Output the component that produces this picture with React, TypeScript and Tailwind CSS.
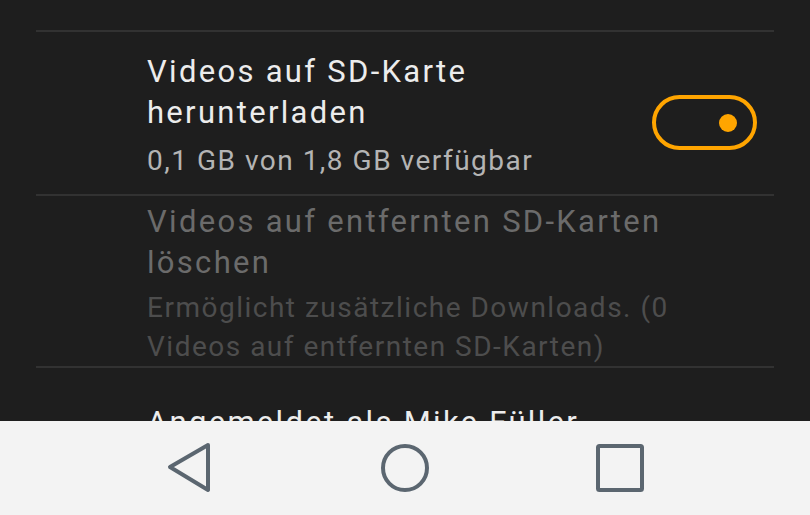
import React from "react";

const font = { fontFamily: "Roboto, 'Noto Sans', sans-serif" };

function Divider() {
  return <div className="mx-[36px] h-[2px] bg-[#323232]" />;
}

function Toggle() {
  return (
    <div className="flex h-[55px] w-[105px] shrink-0 items-center justify-end rounded-full border-[4px] border-[#ffa500] pr-[16px]">
      <span className="h-[18px] w-[18px] rounded-full bg-[#ffa500]" />
    </div>
  );
}

export default function App() {
  return (
    <div
      className="flex h-[515px] w-[810px] flex-col overflow-hidden bg-[#1e1e1e]"
      style={font}
    >
      <main className="flex-1 overflow-hidden pt-[30px]">
        <Divider />

        <div className="flex items-start pl-[147px] pr-[53px]">
          <div className="flex-1 pt-[19px] pb-[14px]">
            <p className="text-[31px] leading-[41px] tracking-[2.3px] text-[#ececec]">
              Videos auf SD-Karte
              <br />
              herunterladen
            </p>
            <p className="mt-[8px] text-[28px] leading-[39px] tracking-[1.5px] text-[#b4b4b4]">
              0,1 GB von 1,8 GB verfügbar
            </p>
          </div>
          <div className="mt-[63px]">
            <Toggle />
          </div>
        </div>

        <Divider />

        <div className="pl-[147px] pr-[60px] pt-[5px]">
          <p className="text-[31px] leading-[41px] tracking-[2.3px] text-[#6b6b6b]">
            Videos auf entfernten SD-Karten
            <br />
            löschen
          </p>
          <p className="mt-[5px] text-[28px] leading-[39px] tracking-[1.5px] text-[#4d4d4d]">
            Ermöglicht zusätzliche Downloads. (0
            <br />
            Videos auf entfernten SD-Karten)
          </p>
        </div>

        <Divider />

        <div className="pl-[147px] pt-[34px]">
          <p className="text-[31px] leading-[41px] tracking-[2.3px] text-[#ececec]">
            Angemeldet als Mike Füller
          </p>
        </div>
      </main>

      <nav className="flex h-[94px] shrink-0 items-center justify-center bg-[#f3f3f3]">
        <div className="flex w-[215px] justify-center">
          <svg width="48" height="52" viewBox="0 0 48 52" fill="none">
            <path
              d="M42 3 L4 25 L42 48 Z"
              stroke="#5b6670"
              strokeWidth="4"
              strokeLinejoin="round"
            />
          </svg>
        </div>
        <div className="flex w-[215px] justify-center">
          <svg width="52" height="52" viewBox="0 0 52 52" fill="none">
            <circle cx="26" cy="26" r="22" stroke="#5b6670" strokeWidth="4" />
          </svg>
        </div>
        <div className="flex w-[215px] justify-center">
          <svg width="52" height="52" viewBox="0 0 52 52" fill="none">
            <rect
              x="4"
              y="4"
              width="44"
              height="44"
              rx="1.5"
              stroke="#5b6670"
              strokeWidth="4"
            />
          </svg>
        </div>
      </nav>
    </div>
  );
}
